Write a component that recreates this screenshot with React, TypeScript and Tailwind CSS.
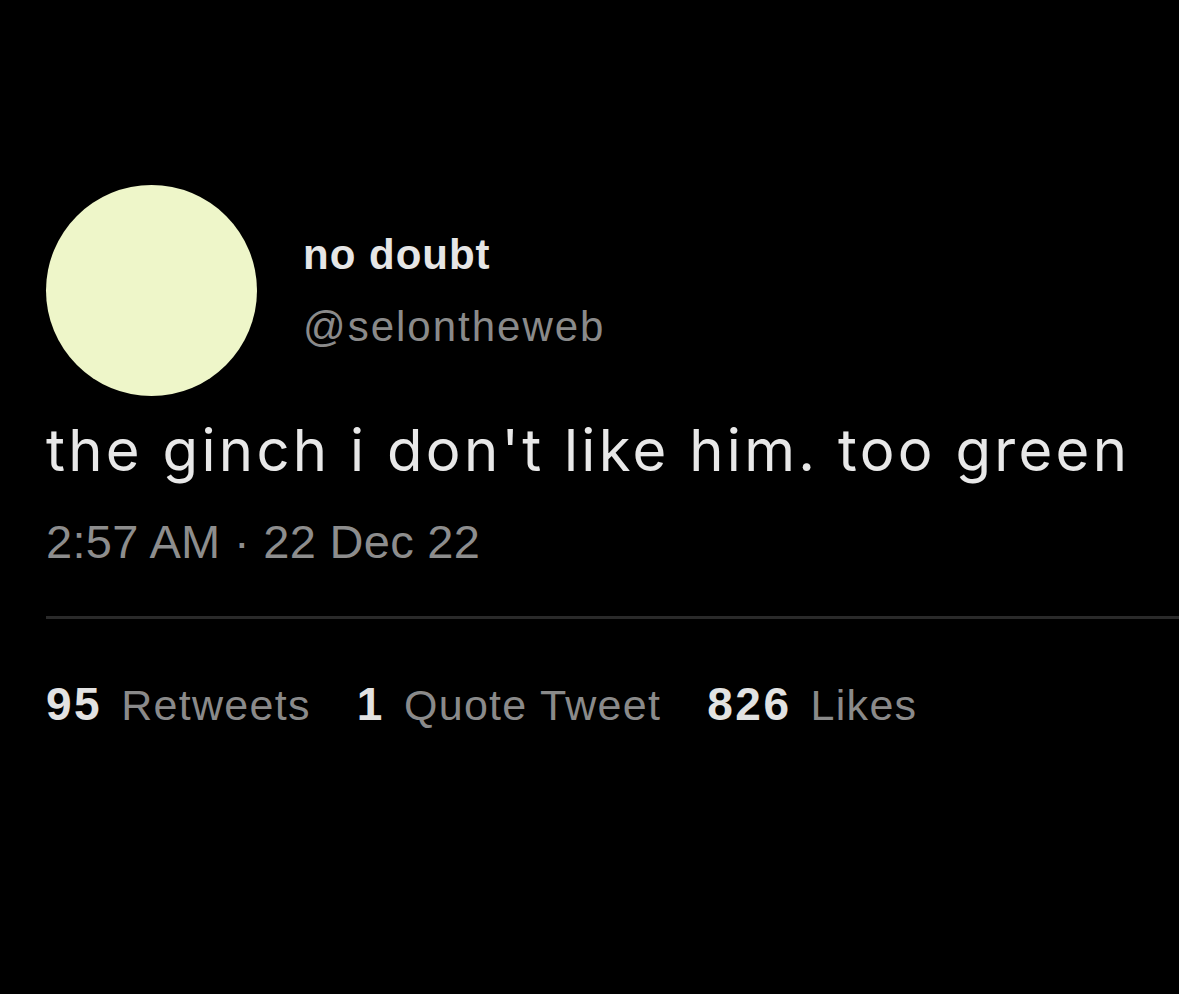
import React from 'react';

const stats = [
  { count: '95', label: 'Retweets' },
  { count: '1', label: 'Quote Tweet' },
  { count: '826', label: 'Likes' },
];

const App = () => {
  return (
    <div className="min-h-[994px] w-full bg-black pl-[46px] pt-[185px] font-['Liberation_Sans',Arial,sans-serif]">
      {/* header: avatar + name */}
      <div className="flex items-center">
        <div className="h-[211px] w-[211px] shrink-0 rounded-full bg-[#eef6c9]" />
        <div className="ml-[46px] flex flex-col">
          <span className="text-[42px] leading-[72px] font-bold tracking-[1px] text-[#e6e6e6]">no doubt</span>
          <span className="text-[42px] leading-[72px] tracking-[2px] text-[#8a8a8a]">@selontheweb</span>
        </div>
      </div>

      {/* tweet body */}
      <p className="mt-[25px] font-['Inter',sans-serif] text-[58px] leading-none tracking-[3.3px] text-[#e8e8e8]">
        the ginch i don't like him. too green
      </p>

      <p className="mt-[39px] text-[47px] leading-none tracking-[0.3px] text-[#8d8d8d]">2:57 AM · 22 Dec 22</p>

      <div className="mt-[51px] h-[3px] bg-[#2a2a2a]" />

      {/* counts */}
      <div className="mt-[62px] flex items-baseline gap-x-[46px] leading-none">
        {stats.map(s => (
          <div key={s.label} className="flex items-baseline gap-x-[19px]">
            <span className="text-[46px] font-bold tracking-[2.5px] text-[#e2e2e2]">{s.count}</span>
            <span className="text-[43px] tracking-[1.3px] text-[#8a8a8a]">{s.label}</span>
          </div>
        ))}
      </div>
    </div>
  );
};

export default App;
